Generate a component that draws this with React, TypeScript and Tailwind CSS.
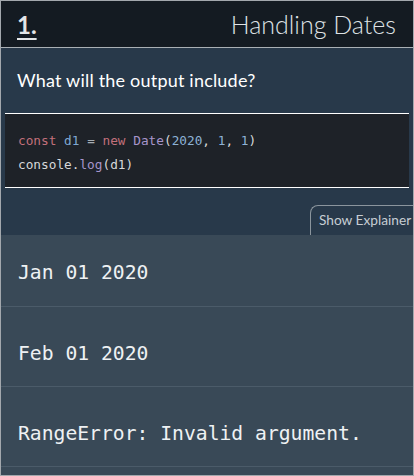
export default function App() {
  const answers = ['Jan 01 2020', 'Feb 01 2020', 'RangeError: Invalid argument.'];

  return (
    <div className="w-[414px] h-[476px] overflow-hidden border border-[#a3a8ad] bg-[#394957] flex flex-col" style={{ fontFamily: "Lato, 'Open Sans', sans-serif" }}>
      {/* header */}
      <div className="h-[47px] shrink-0 bg-[#141b22] border-b border-[#aab0b5] flex items-center justify-between pl-4 pr-[17px]">
        <span className="text-[24px] font-bold text-[#e4e6e8] underline underline-offset-[4px] decoration-2 leading-none mt-[2px]">1.</span>
        <span className="text-[25px] font-light text-[#dfe2e5] leading-none">Handling Dates</span>
      </div>

      {/* question */}
      <div className="shrink-0 bg-[#28394a] pt-[20px] flex flex-col">
        <p className="px-4 text-[18px] tracking-[0.2px] text-white leading-6">What will the output include?</p>
        <div className="mt-[21px] mx-[4px] bg-[#1e2228] border-y border-white pt-[15px] pb-[10px] px-[13px] text-[12.75px] leading-6 text-[#d6d8da]" style={{ fontFamily: "'DejaVu Sans Mono', monospace" }}>
          <div>
            <span className="text-[#c2707b]">const</span> <span className="text-[#7ea8d3]">d1</span>{' '}
            <span className="text-[#a7adb3]">=</span> <span className="text-[#c2707b]">new</span>{' '}
            <span className="text-[#a795cb]">Date</span>(<span className="text-[#8db2d6]">2020</span>,{' '}
            <span className="text-[#8db2d6]">1</span>, <span className="text-[#8db2d6]">1</span>)
          </div>
          <div>
            console.<span className="text-[#a795cb]">log</span>(d1)
          </div>
        </div>
        <div className="flex justify-end mt-[17px]">
          <div className="h-[30px] w-[105px] -mr-[2px] border-l border-t border-[#8b959d] rounded-tl-[8px] pl-[8px] flex items-center text-[13.7px] text-[#c6cdd3]">
            Show Explainer
          </div>
        </div>
      </div>

      {/* answers */}
      <div className="flex flex-col" style={{ fontFamily: "'DejaVu Sans Mono', monospace" }}>
        {answers.map((a, i) => (
          <div
            key={a}
            className={`border-b border-[#4b5b69] px-[17px] text-[19.7px] leading-6 text-[#eef1f3] ${i === 0 ? 'pt-[26px] pb-[21px]' : 'pt-[35px] pb-[20px]'}`}
          >
            {a}
          </div>
        ))}
      </div>
    </div>
  );
}
